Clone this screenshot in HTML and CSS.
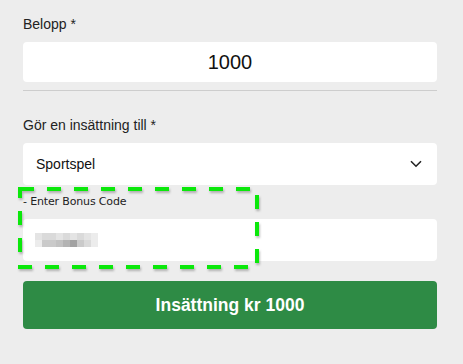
FILE: index.html
```html
<!DOCTYPE html>
<html lang="sv">
<head>
<meta charset="utf-8">
<title>Insättning</title>
<link rel="stylesheet" href="styles.css">
</head>
<body>
<form class="form">
  <label class="label label-first">Belopp *</label>
  <div class="field amount">1000</div>
  <hr class="sep">
  <label class="label label-second">Gör en insättning till *</label>
  <div class="field select">
    <span>Sportspel</span>
    <svg class="chev" width="12" height="8" viewBox="0 0 12 8"><path d="M1 1.2 L6 6.2 L11 1.2" fill="none" stroke="#222" stroke-width="1.6"/></svg>
  </div>
  <div class="bonus">
    <div class="bonus-label">- Enter Bonus Code</div>
    <div class="field code">
      <div class="mosaic">
        <i class="c1"></i><i class="c2"></i><i class="c2"></i><i class="c1"></i><i class="c2"></i><i class="c1"></i><i class="c2"></i><i class="c1"></i><i class="c3"></i>
        <i class="c3"></i><i class="c4"></i><i class="c4"></i><i class="c5"></i><i class="c6"></i><i class="c7"></i><i class="c4"></i><i class="c2"></i><i class="c3"></i>
      </div>
    </div>
    <svg class="outline" width="250" height="92" viewBox="0 0 250 92"><rect x="3" y="5" width="237" height="78" fill="none" stroke="#0be80b" stroke-width="4" stroke-dasharray="14 13"/></svg>
  </div>
  <button type="button" class="submit">Insättning kr 1000</button>
</form>
</body>
</html>
```
FILE: styles.css
```css
html, body {
  margin: 0;
  padding: 0;
  background: #ededed;
}
.form {
  display: flex;
  flex-direction: column;
  padding: 16px 26px 0 23px;
  font-family: "Liberation Sans", Arial, sans-serif;
  color: #222;
}
.label {
  font-size: 14px;
  line-height: 16px;
  color: #222;
}
.field {
  background: #fff;
  border-radius: 4px;
  box-sizing: border-box;
}
.amount {
  margin-top: 10px;
  height: 40px;
  display: flex;
  align-items: center;
  justify-content: center;
  font-size: 20px;
  color: #111;
}
.sep {
  margin: 8px 0 0 0;
  border: 0;
  height: 1px;
  background: #cdcdcd;
}
.label-second {
  margin-top: 26px;
}
.select {
  margin-top: 10px;
  height: 42px;
  display: flex;
  align-items: center;
  justify-content: space-between;
  padding: 0 15px 0 13px;
  font-size: 14px;
  color: #111;
}
.chev {
  display: block;
}
.bonus {
  position: relative;
}
.bonus-label {
  margin-top: 10px;
  font-family: "DejaVu Sans", Verdana, sans-serif;
  font-size: 11px;
  line-height: 13px;
  letter-spacing: -0.15px;
  color: #222;
}
.code {
  margin-top: 11px;
  height: 42px;
  display: flex;
  align-items: center;
  padding-left: 12px;
}
.mosaic {
  display: grid;
  grid-template-columns: repeat(9, 7px);
  grid-template-rows: 7px 7px;
}
.mosaic i { display: block; }
.c1 { background: #e4e4e4; }
.c2 { background: #dadada; }
.c3 { background: #ececec; }
.c4 { background: #cacaca; }
.c5 { background: #c2c2c2; }
.c6 { background: #b4b4b4; }
.c7 { background: #a2a2a2; }
.outline {
  position: absolute;
  left: -6px;
  top: -1px;
  filter: drop-shadow(1px 2px 1px rgba(0,0,0,0.25));
}
.submit {
  margin-top: 20px;
  height: 48px;
  border: 0;
  border-radius: 4px;
  background: #2e8b45;
  color: #fff;
  font-family: "Liberation Sans", Arial, sans-serif;
  font-weight: bold;
  font-size: 17.5px;
  cursor: pointer;
}
```
